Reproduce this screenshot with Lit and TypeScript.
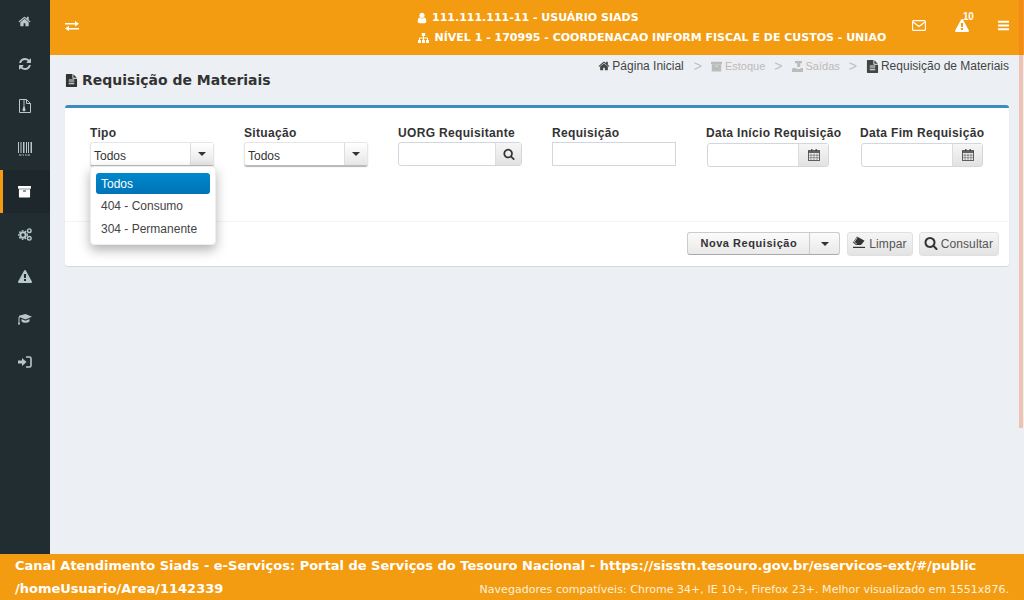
import { LitElement, html, css, svg } from "lit";
import { customElement } from "lit/decorators.js";

const P = {
  home: "M1472 992v480q0 26-19 45t-45 19h-384v-384H768v384H384q-26 0-45-19t-19-45V992q0-1 .5-3t.5-3l575-474 575 474q1 2 1 6zm223-69l-62 74q-8 9-21 11h-3q-13 0-21-7L896 424l-692 577q-12 8-24 7-13-2-21-11l-62-74q-8-10-7-23.5t11-21.5l719-599q32-26 76-26t76 26l244 204V288q0-14 9-23t23-9h192q14 0 23 9t9 23v408l219 182q10 8 11 21.5t-7 23.5z",
  refresh: "M1639 1056q0 5-1 7-64 268-268 434.5T892 1664q-146 0-282.500-55T366 1452l-129 129q-19 19-45 19t-45-19-19-45v-448q0-26 19-45t45-19h448q26 0 45 19t19 45-19 45l-137 137q71 66 161 102t187 36q134 0 250-65t186-179q11-17 53-117 8-23 30-23h192q13 0 22.500 9.500t9.500 22.500zm25-800v448q0 26-19 45t-45 19h-448q-26 0-45-19t-19-45 19-45l138-138q-148-137-349-137-134 0-250 65T460 628q-11 17-53 117-8 23-30 23H178q-13 0-22.500-9.500T146 736v-7q65-268 270-434.500T896 128q146 0 284 55.500T1425 340l130-129q19-19 45-19t45 19 19 45z",
  user: "M1536 1399q0 109-62.500 187t-150.500 78H469q-88 0-150.500-78T256 1399q0-85 8.500-160.500t31.500-152 58.500-131 94-89T583 832q131 128 313 128t313-128q76 0 134.500 34.500t94 89 58.500 131 31.500 152 8.500 160.500zm-256-887q0 159-112.500 271.500T896 896 624.500 783.500 512 512t112.500-271.500T896 128t271.500 112.500T1280 512z",
  bars: "M1664 1344v128q0 26-19 45t-45 19H192q-26 0-45-19t-19-45v-128q0-26 19-45t45-19h1408q26 0 45 19t19 45zm0-512v128q0 26-19 45t-45 19H192q-26 0-45-19t-19-45V832q0-26 19-45t45-19h1408q26 0 45 19t19 45zm0-512v128q0 26-19 45t-45 19H192q-26 0-45-19t-19-45V320q0-26 19-45t45-19h1408q26 0 45 19t19 45z",
  warning: "M1024 1375v-190q0-14-9.500-23.500T992 1152H800q-13 0-22.500 9.500T768 1185v190q0 14 9.500 23.500t22.500 9.500h192q13 0 22.500-9.500t9.500-23.500zm-2-374l18-459q0-12-10-19-13-11-24-11H786q-11 0-24 11-10 7-10 21l17 457q0 10 10 16.500t24 6.500h185q14 0 23.500-6.500t10.500-16.500zm-14-934l768 1408q35 63-2 126-17 29-46.500 46t-63.500 17H128q-34 0-63.500-17T18 1601q-37-63-2-126L784 67q17-31 47-49t65-18 65 18 47 49z",
  search: "M1216 832q0-185-131.500-316.500T768 384 451.500 515.500 320 832t131.500 316.500T768 1280t316.500-131.500T1216 832zm512 832q0 52-38 90t-90 38q-54 0-90-38l-343-342q-179 124-399 124-143 0-273.500-55.500t-225-150-150-225T64 832t55.500-273.500 150-225 225-150T768 128t273.500 55.500 225 150 150 225T1472 832q0 220-124 399l343 343q37 37 37 90z",
  file: "M1596 476q14 14 28 36h-472v-472q22 14 36 28zm-476 164q-40 0-68-28t-28-68v-544h-800q-40 0-68 28t-28 68v1600q0 40 28 68t68 28h1344q40 0 68-28t28-68v-1056h-544zm160 736q0 14-9 23t-23 9h-704q-14 0-23-9t-9-23v-64q0-14 9-23t23-9h704q14 0 23 9t9 23v64zm0-256q0 14-9 23t-23 9h-704q-14 0-23-9t-9-23v-64q0-14 9-23t23-9h704q14 0 23 9t9 23v64zm0-256q0 14-9 23t-23 9h-704q-14 0-23-9t-9-23v-64q0-14 9-23t23-9h704q14 0 23 9t9 23v64z",
  archive: "M128 576h1536v1056q0 40-28 68t-68 28H224q-40 0-68-28t-28-68zM64 128h1664q26 0 45 19t19 45v256q0 26-19 45t-45 19H64q-26 0-45-19T0 448V192q0-26 19-45t45-19zM736 768q-26 0-45 19t-19 45 19 45 45 19h320q26 0 45-19t19-45-19-45-45-19z",
};

const fa = (d: string, size: number) =>
  html`<svg class="ic" width=${size} height=${size} viewBox="0 0 1792 1792" fill="currentColor"><path d=${d}></path></svg>`;

const raw = (w: number, h: number, body: unknown) =>
  html`<svg class="ic" width=${w} height=${h} viewBox="0 0 ${w} ${h}">${body}</svg>`;

const zipIcon = raw(12, 14, svg`<path d="M.5.5h7l4 4v9H.5z" fill="none" stroke="currentColor"/><path d="M7.500.5v4h4" fill="none" stroke="currentColor"/><path d="M4 1.500h2v1H4zM4 3.500h2v1H4zM4 5.500h2v1H4zM4 7.500h2v2a1.600 1.600 0 1 1-2 0z" fill="currentColor"/>`);
const barcode = raw(14, 14, svg`<path d="M0 0h1v11H0zM2.500 0h1v11h-1zM5 0h1.500v11H5zM8 0h1v11H8zM10 0h1v11h-1zM12.500 0h1.500v11h-1.500zM1 12.500h2.500v1H1zM4.500 12.500h1.500v1H4.500zM7 12.500h1.500v1H7zM9.500 12.500h2.500v1H9.500z" fill="currentColor"/>`);
const gears = raw(14, 13, svg`<circle cx="5" cy="7" r="2.700" fill="none" stroke="currentColor" stroke-width="2"/><circle cx="5" cy="7" r="4.300" fill="none" stroke="currentColor" stroke-width="1.300" stroke-dasharray="1.600 1.500"/><circle cx="11.300" cy="2.700" r="1.800" fill="none" stroke="currentColor" stroke-width="1.400"/><circle cx="11.300" cy="10.300" r="1.800" fill="none" stroke="currentColor" stroke-width="1.400"/>`);
const grad = raw(14, 11, svg`<path d="M7.500 0L14 2.800 7.500 5.600 2 3.300 1 3.700 1 1.800z" fill="currentColor"/><path d="M3.500 5l4 1.700 4-1.700v2.200c-1 1-2.500 1.500-4 1.500s-3-.5-4-1.500z" fill="currentColor"/><path d="M1 3v5" stroke="currentColor"/><path d="M.2 8.200h1.600l.2 2.300H0z" fill="currentColor"/>`);
const signin = raw(14, 12, svg`<path d="M0 4.500h4V2l4.500 4L4 10V7.500H0z" fill="currentColor"/><path d="M8 1h3.500A1.500 1.500 0 0 1 13 2.500v7a1.500 1.500 0 0 1-1.500 1.500H8" fill="none" stroke="currentColor" stroke-width="1.600"/>`);
const exchange = raw(14, 10, svg`<path d="M0 2h10V0l4 2.700-4 2.800V3.500H0z" fill="currentColor"/><path d="M14 7H4V4.800L0 7.500 4 10V8.500h10z" fill="currentColor"/>`);
const envelope = raw(14, 11, svg`<rect x=".6" y=".6" width="12.800" height="9.800" rx="1" fill="none" stroke="currentColor" stroke-width="1.100"/><path d="M1 2l6 4.500L13 2" fill="none" stroke="currentColor" stroke-width="1.100"/>`);
const sitemap = raw(11, 10, svg`<path d="M3.800 0h3.400v3H3.800zM0 7h3v3H0zM4 7h3v3H4zM8 7h3v3H8z" fill="currentColor"/><path d="M5.500 3v4M1.500 7V5h8v2" fill="none" stroke="currentColor"/>`);
const calendar = raw(12, 12, svg`<rect x=".5" y="1.500" width="11" height="10" fill="none" stroke="currentColor" stroke-opacity=".75"/><path d="M.5 2h11v2H.5zM3 0h1.500v2.500H3zM7.500 0H9v2.500H7.500z" fill="currentColor" fill-opacity=".75"/><path d="M.5 6.200h11M.5 8.700h11M3 4.500v7M6 4.500v7M9 4.500v7" stroke="currentColor" stroke-width=".6" stroke-opacity=".7" fill="none"/>`);
const eraser = raw(14, 13, svg`<path d="M5 .5l7.500 4.300-3.500 4.200H4L1 6.500z" fill="currentColor"/><path d="M5.300 1.500L2.300 6l2.500 2" fill="none" stroke="#e8e8e8" stroke-width=".8"/><path d="M1 10.800h12V12H1z" fill="currentColor"/>`);
const upload = raw(11, 11, svg`<path d="M3 0h7v2.200H8.200V6h-3V2.200H3z" fill="currentColor"/><path d="M1 7h3l1 1h3l1-1h2v4H0V8z" fill="currentColor"/>`);

@customElement("app-root")
export class AppRoot extends LitElement {
  static styles = css`
    :host { display: block; width: 1024px; height: 600px; overflow: hidden; position: relative; font-family: "Liberation Sans", Arial, sans-serif; }
    .ic { display: block; flex: none; }
    .app { display: flex; flex-direction: column; height: 600px; }
    .main { display: flex; height: 554px; }
    .side { width: 50px; flex: none; background: #222d32; color: #b8c7ce; display: grid; grid-auto-rows: 42.600px; align-content: start; }
    .side div { display: flex; align-items: center; justify-content: center; padding-right: 1px; }
    .side .on { background: #1e282c; color: #fff; box-shadow: inset 3px 0 0 #f39c12; }
    .content { flex: 1; min-width: 0; background: #ecf0f5; display: flex; flex-direction: column; }
    .top { height: 55px; background: #f39c12; color: #fff; display: flex; align-items: center; padding-left: 15px; flex: none; }
    .swap { margin-top: -3px; }
    .who { margin-left: 340px; font: bold 11px/20px "DejaVu Sans", sans-serif; white-space: nowrap; width: 479px; flex: none; }
    .who div { display: flex; align-items: center; }
    .who .u { gap: 4px; margin-left: -3px; }
    .who .n { gap: 5.500px; margin-left: -1px; }
    .tools { display: flex; align-items: center; margin-top: -4px; }
    .tool { width: 42px; display: flex; justify-content: center; position: relative; }
    .tool.alert { box-sizing: border-box; padding-left: 2px; }
    .count { position: absolute; top: -7px; left: 23px; font: bold 10px/10px "Liberation Sans", sans-serif; letter-spacing: -.3px; }
    .body { padding: 0 15px; flex: 1; }
    .heading { height: 50px; position: relative; }
    h1 { margin: 0; padding-top: 17px; display: flex; align-items: center; gap: 4px; font: bold 14px/17px "DejaVu Sans", sans-serif; color: #333; }
    .crumbs { position: absolute; right: 0; top: 4px; display: flex; align-items: center; font-size: 12px; line-height: 14px; color: #444; }
    .crumbs span { display: flex; align-items: center; gap: 2px; }
    .crumbs .off { color: #bbb; background: #eceef1; font-size: 11px; gap: 3px; }
    .crumbs i { font-style: normal; color: #c0c0c0; margin: 0 9px; font-size: 14px; }
    .crumbs i.first { margin-left: 10px; }
    .card { background: #fff; border-top: 3px solid #3c8dbc; border-radius: 3px; box-shadow: 0 1px 1px rgba(0,0,0,.1); height: 161px; box-sizing: border-box; display: flex; flex-direction: column; }
    .fields { height: 114px; border-bottom: 1px solid #f4f4f4; display: grid; grid-template-columns: repeat(6, 154px); padding: 16px 0 0 25px; box-sizing: border-box; flex: none; }
    .f { position: relative; display: flex; flex-direction: column; align-items: flex-start; }
    label { font: bold 12px/19px "Liberation Sans", sans-serif; color: #333; height: 18px; letter-spacing: .33px; white-space: nowrap; }
    .sel { width: 124px; height: 24px; display: flex; box-sizing: border-box; border-radius: 3px; box-shadow: 0 1px 1px rgba(0,0,0,.3); border: 1px solid #e6e6e6; border-bottom-color: #bbb; font-size: 12px; color: #333; }
    .sel span { flex: 1; padding: 5px 0 0 3px; line-height: 16px; }
    .sel b { width: 22px; border-left: 1px solid #ddd; background: linear-gradient(#fff, #e6e6e6); display: flex; align-items: center; justify-content: center; }
    .caret { width: 0; height: 0; border: 4px solid transparent; border-top-color: #333; border-bottom: 0; }
    .menu { position: absolute; left: 0; top: 42px; width: 126px; height: 79px; box-sizing: border-box; background: #fff; border-radius: 4px; border: 1px solid #eee; box-shadow: 0 5px 12px rgba(0,0,0,.3); padding: 6px 5px; font-size: 12px; color: #444; z-index: 5; }
    .menu div { height: 22.500px; line-height: 22px; padding-left: 5px; border-radius: 3px; white-space: nowrap; }
    .menu .act { height: 21px; line-height: 23px; background: linear-gradient(#0088cc, #0073b7); color: #fff; margin-bottom: 1px; }
    .grp { display: flex; height: 24px; box-sizing: border-box; border: 1px solid #d2d6de; border-radius: 3px; width: 124px; }
    .grp span { flex: 1; }
    .grp b { width: 25px; border-left: 1px solid #ddd; background: linear-gradient(#f6f6f6, #e2e2e2); display: flex; align-items: center; justify-content: center; color: #333; }
    .plain { width: 124px; height: 24px; border: 1px solid #d2d6de; box-sizing: border-box; }
    .date { width: 122px; margin: 1px 0 0 1px; }
    .date b { width: 29px; }
    .actions { display: flex; justify-content: flex-end; align-items: flex-start; gap: 6px; padding: 10px 10px 0 0; }
    .split { display: flex; height: 23px; box-sizing: border-box; border: 1px solid #ccc; border-bottom-color: #aaa; border-radius: 3px; background: linear-gradient(#fbfbfb, #e9e9e9); font: bold 11px/21px "Liberation Sans", sans-serif; color: #333; margin-right: 1px; }
    .split span { padding: 0 12px; letter-spacing: .55px; white-space: nowrap; }
    .split b { width: 29px; border-left: 1px solid #ccc; display: flex; align-items: center; justify-content: center; }
    .btn { height: 24px; box-sizing: border-box; display: flex; align-items: center; gap: 3px; padding: 0 5px 0 4px; background: linear-gradient(#f5f5f5, #e3e3e3); border: 1px solid #e0e0e0; border-radius: 3px; font-size: 12px; letter-spacing: .11px; color: #555; }
    .btn .ic { color: #333; margin-top: -3px; }
    .foot { height: 46px; background: #f39c12; color: #fff; padding: 0 15px; flex: none; font: bold 13px/23px "DejaVu Sans", sans-serif; box-sizing: border-box; }
    .foot div { white-space: nowrap; }
    .foot .row { display: flex; justify-content: space-between; }
    .foot small { padding-top: 1px; font: 11px/23px "DejaVu Sans", sans-serif; letter-spacing: .033px; color: #fdf0da; }
    .thumb { position: absolute; right: 1px; top: 0; width: 4px; height: 428px; background: rgba(250,100,40,.33); }
  `;

  render() {
    const menu = html`<div class="menu"><div class="act">Todos</div><div>404 - Consumo</div><div>304 - Permanente</div></div>`;
    return html`
      <div class="app">
        <div class="main">
          <nav class="side">
            <div>${fa(P.home, 13)}</div>
            <div>${fa(P.refresh, 14)}</div>
            <div>${zipIcon}</div>
            <div>${barcode}</div>
            <div class="on">${fa(P.archive, 13)}</div>
            <div>${gears}</div>
            <div>${fa(P.warning, 14)}</div>
            <div>${grad}</div>
            <div>${signin}</div>
          </nav>
          <section class="content">
            <header class="top">
              <div class="swap">${exchange}</div>
              <div class="who">
                <div class="u">${fa(P.user, 12)}<span>111.111.111-11 - USUÁRIO SIADS</span></div>
                <div class="n">${sitemap}<span>NÍVEL 1 - 170995 - COORDENACAO INFORM FISCAL E DE CUSTOS - UNIAO</span></div>
              </div>
              <div class="tools">
                <div class="tool">${envelope}</div>
                <div class="tool alert">${fa(P.warning, 14)}<span class="count">10</span></div>
                <div class="tool">${fa(P.bars, 13)}</div>
              </div>
            </header>
            <div class="body">
              <div class="heading">
                <h1>${fa(P.file, 13)}Requisição de Materiais</h1>
                <div class="crumbs">
                  <span>${fa(P.home, 12)}Página Inicial</span><i class="first">&gt;</i>
                  <span class="off">${fa(P.archive, 11)}Estoque</span><i>&gt;</i>
                  <span class="off">${upload}Saídas</span><i>&gt;</i>
                  <span>${fa(P.file, 13)}Requisição de Materiais</span>
                </div>
              </div>
              <div class="card">
                <div class="fields">
                  <div class="f"><label>Tipo</label><div class="sel"><span>Todos</span><b><em class="caret"></em></b></div>${menu}</div>
                  <div class="f"><label>Situação</label><div class="sel"><span>Todos</span><b><em class="caret"></em></b></div></div>
                  <div class="f"><label>UORG Requisitante</label><div class="grp"><span></span><b>${fa(P.search, 12)}</b></div></div>
                  <div class="f"><label>Requisição</label><div class="plain"></div></div>
                  <div class="f"><label>Data Início Requisição</label><div class="grp date"><span></span><b>${calendar}</b></div></div>
                  <div class="f"><label>Data Fim Requisição</label><div class="grp date"><span></span><b>${calendar}</b></div></div>
                </div>
                <div class="actions">
                  <div class="split"><span>Nova Requisição</span><b><em class="caret"></em></b></div>
                  <div class="btn">${eraser}Limpar</div>
                  <div class="btn">${fa(P.search, 14)}Consultar</div>
                </div>
              </div>
            </div>
          </section>
        </div>
        <footer class="foot">
          <div>Canal Atendimento Siads - e-Serviços: Portal de Serviços do Tesouro Nacional - https://sisstn.tesouro.gov.br/eservicos-ext/#/public</div>
          <div class="row"><span>/homeUsuario/Area/1142339</span><small>Navegadores compatíveis: Chrome 34+, IE 10+, Firefox 23+. Melhor visualizado em 1551x876.</small></div>
        </footer>
      </div>
      <div class="thumb"></div>
    `;
  }
}
